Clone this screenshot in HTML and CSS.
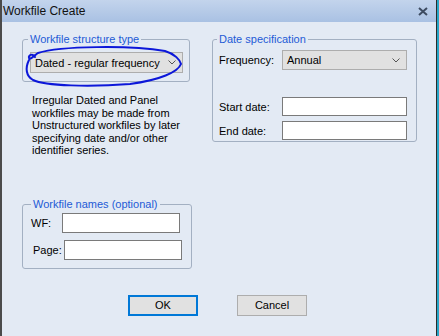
FILE: index.html
```html
<!DOCTYPE html>
<html lang="en">
<head>
    <meta charset="UTF-8">
    <meta name="viewport" content="width=device-width, initial-scale=1.0">
    <title>Workfile Create</title>
    <link rel="stylesheet" href="styles.css">
</head>
<body>
    <div class="window">
        <div class="titlebar">
            <span class="title">Workfile Create</span>
            <svg class="close" width="10" height="9" viewBox="0 0 10 9">
                <path d="M1 1 L9 8 M9 1 L1 8" stroke="#3d4b61" stroke-width="2"/>
            </svg>
        </div>

        <div class="content">
            <div class="columns">
                <div class="col-left">
                    <fieldset class="group structure">
                        <legend>Workfile structure type</legend>
                        <div class="select structure-select">
                            <span>Dated - regular frequency</span>
                            <svg class="chevron" width="8" height="5" viewBox="0 0 8 5"><path d="M0.5 0.5 L4 4 L7.5 0.5" fill="none" stroke="#555" stroke-width="1"/></svg>
                        </div>
                    </fieldset>

                    <p class="note">Irregular Dated and Panel workfiles may be made from Unstructured workfiles by later specifying date and/or other identifier series.</p>

                    <fieldset class="group names">
                        <legend>Workfile names (optional)</legend>
                        <div class="row">
                            <label for="wf" class="wf-label">WF:</label>
                            <input type="text" id="wf">
                        </div>
                        <div class="row">
                            <label for="page" class="page-label">Page:</label>
                            <input type="text" id="page">
                        </div>
                    </fieldset>
                </div>

                <div class="col-right">
                    <fieldset class="group dates">
                        <legend>Date specification</legend>
                        <div class="row">
                            <label>Frequency:</label>
                            <div class="select freq-select">
                                <span>Annual</span>
                                <svg class="chevron" width="8" height="5" viewBox="0 0 8 5"><path d="M0.5 0.5 L4 4 L7.5 0.5" fill="none" stroke="#555" stroke-width="1"/></svg>
                            </div>
                        </div>
                        <div class="row start">
                            <label for="start">Start date:</label>
                            <input type="text" id="start">
                        </div>
                        <div class="row">
                            <label for="end">End date:</label>
                            <input type="text" id="end">
                        </div>
                    </fieldset>
                </div>
            </div>

            <div class="buttons">
                <button class="btn default">OK</button>
                <button class="btn">Cancel</button>
            </div>
        </div>

        <!-- hand drawn mark around the structure dropdown -->
        <svg class="scribble" width="439" height="336" viewBox="0 0 439 336">
            <path d="M35 57 C33 53, 28 55, 29 58 C30 60, 34 56, 38 53 C60 46, 130 45, 165 51 C175 54, 180 60, 181 64 C178 72, 160 80, 130 84 C90 87, 45 86, 33 80 C26 76, 25 68, 29 60"
                  fill="none" stroke="#0c17d9" stroke-width="2" stroke-linecap="round"/>
        </svg>
    </div>
</body>
</html>
```

FILE: styles.css
```css
body {
    margin: 0;
    background-color: #27a5c6;
    font-family: "Liberation Sans", Arial, sans-serif;
    font-size: 11px;
    color: #000;
}
.window {
    position: relative;
    width: 437px;
    height: 336px;
    box-sizing: border-box;
    border-left: 2px solid #4b4b4b;
    border-right: 1px solid #2a2a2a;
    background-color: #e3eaf4;
    overflow: hidden;
}
.titlebar {
    height: 22px;
    display: flex;
    align-items: center;
    justify-content: space-between;
    padding: 0 6px 0 1px;
    background: linear-gradient(#c3d4ec, #a9c1e3);
}
.title {
    font-size: 12px;
    color: #111;
}
.close {
    margin-right: 2px;
    margin-top: 1px;
}
.content {
    padding: 11px 0 0 20px;
}
.columns {
    display: flex;
    gap: 22px;
}
.col-left {
    width: 168px;
}
.col-right {
    width: 205px;
}
/* group boxes */
.group {
    margin: 0;
    border: 1px solid #a3b0c2;
    border-radius: 3px;
    padding: 0 6px 7px 5px;
}
.group legend {
    padding: 0 2px;
    color: #1e5bd6;
    font-size: 11px;
    line-height: 13px;
}
.structure {
    padding: 6px 6px 8px 7px;
}
.structure legend {
    margin-left: -2px;
}
.select {
    display: flex;
    align-items: center;
    justify-content: space-between;
    box-sizing: border-box;
    height: 21px;
    padding: 0 6px 0 4px;
    background-color: #e1e1e1;
    border: 1px solid #adadad;
}
.structure-select {
    width: 153px;
}
.note {
    margin: 12px 0 0 10px;
    line-height: 12.5px;
}
.names {
    margin-top: 41px;
    padding: 2px 9px 8px 8px;
}
.names .row {
    display: flex;
    align-items: center;
}
.names .row + .row {
    margin-top: 7px;
}
.names label {
    width: 31px;
}
.page-label {
    padding-left: 2px;
}
input {
    box-sizing: border-box;
    width: 118px;
    height: 20px;
    margin: 0;
    padding: 0 3px;
    border: 1px solid #7a7a7a;
    background-color: #fff;
    font-family: inherit;
    font-size: 11px;
}
.dates {
    height: 109px;
    box-sizing: border-box;
    padding: 4px 9px 6px 4px;
}
.dates .row {
    display: grid;
    grid-template-columns: 63px 125px;
    align-items: center;
    margin-left: 2px;
}
.dates .row + .row {
    margin-top: 5px;
}
.dates .row.start {
    margin-top: 27px;
}
.dates input {
    width: 125px;
    height: 19px;
}
.freq-select {
    width: 125px;
    height: 20px;
}
/* bottom buttons */
.buttons {
    display: flex;
    gap: 39px;
    margin: 26px 0 0 106px;
}
.btn {
    box-sizing: border-box;
    width: 70px;
    height: 21px;
    padding: 0;
    background-color: #e1e1e1;
    border: 1px solid #adadad;
    font-family: inherit;
    font-size: 11px;
    color: #000;
}
.btn.default {
    border: 2px solid #0078d7;
}
.scribble {
    position: absolute;
    top: 0;
    left: -2px;
    pointer-events: none;
}
```
